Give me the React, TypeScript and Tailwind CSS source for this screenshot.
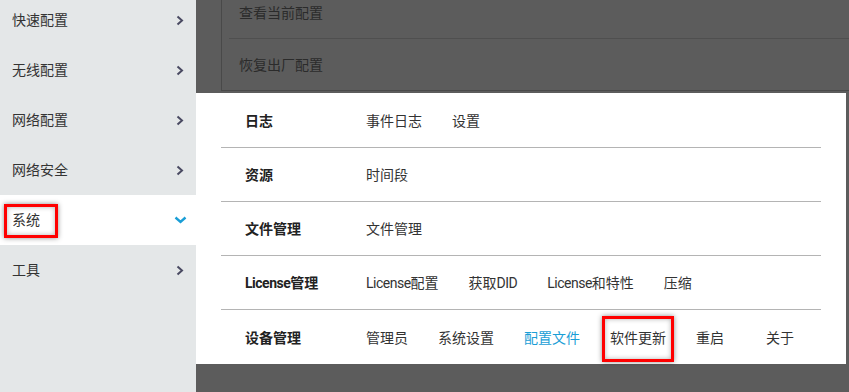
import { ReactNode } from 'react';

const font = { fontFamily: 'Roboto, "Noto Sans CJK SC", sans-serif' };

const sideItems = ['快速配置', '无线配置', '网络配置', '网络安全', '系统', '工具'];

const menuRows: { label: string; links: string[] }[] = [
  { label: '日志', links: ['事件日志', '设置'] },
  { label: '资源', links: ['时间段'] },
  { label: '文件管理', links: ['文件管理'] },
  { label: 'License管理', links: ['License配置', '获取DID', 'License和特性', '压缩'] },
  { label: '设备管理', links: ['管理员', '系统设置', '配置文件', '软件更新', '重启', '关于'] },
];

// the original font is narrower for latin letters than Roboto
function Txt({ text }: { text: string }) {
  const parts = text.split(/([A-Za-z]+)/).filter(Boolean);
  return (
    <>
      {parts.map((p, i) =>
        /[A-Za-z]/.test(p) ? (
          <span key={i} className="tracking-[-0.5px]">
            {p}
          </span>
        ) : (
          <span key={i}>{p}</span>
        )
      )}
    </>
  );
}

function ChevronRight() {
  return (
    <svg width="8" height="11" viewBox="0 0 8 11" className="mr-[12px]">
      <polyline points="1.5,1.5 6,5.5 1.5,9.5" fill="none" stroke="#4a4a62" strokeWidth="2" />
    </svg>
  );
}

function ChevronDown() {
  return (
    <svg width="13" height="8" viewBox="0 0 13 8" className="mr-[9px]">
      <polyline points="1.5,1.5 6.5,6 11.5,1.5" fill="none" stroke="#1a9ed6" strokeWidth="2.4" />
    </svg>
  );
}

function RedMark({ children, className }: { children: ReactNode; className: string }) {
  return (
    <span className="relative inline-block">
      {children}
      <span
        className={`absolute border-[3px] border-[#ff0000] shadow-[0_0_5px_rgba(0,0,0,0.45),inset_0_0_5px_rgba(0,0,0,0.3)] ${className}`}
      />
    </span>
  );
}

export default function App() {
  return (
    <div className="flex w-[849px] h-[392px] overflow-hidden" style={font}>
      {/* left nav */}
      <aside className="w-[196px] shrink-0 bg-[#e4e7e8]">
        <ul className="-mt-[5px]">
          {sideItems.map((item) => {
            const active = item === '系统';
            return (
              <li
                key={item}
                className={`h-[50px] flex items-center justify-between pl-[12px] text-[14px] leading-[20px] text-[#333] ${
                  active ? 'bg-white' : ''
                }`}
              >
                {active ? (
                  <RedMark className="-left-[8px] -right-[18px] -top-[6px] -bottom-[8px]">{item}</RedMark>
                ) : (
                  <span>{item}</span>
                )}
                {active ? <ChevronDown /> : <ChevronRight />}
              </li>
            );
          })}
        </ul>
      </aside>

      {/* dimmed page + mega menu */}
      <main className="flex-1 bg-[#5c5c5c] flex flex-col">
        <div className="ml-[25px] h-[91px] border-l border-b border-[#494949] overflow-hidden pl-[7px]">
          <div className="-mt-[12px] text-[14px] text-[#2b2b2b]">
            <div className="h-[51px] flex items-center pl-[10px] border-b border-[#4f4f4f]">查看当前配置</div>
            <div className="h-[52px] flex items-center pl-[10px]">恢复出厂配置</div>
          </div>
        </div>

        <div className="mt-[2px] w-[650px] h-[271px] bg-white pt-[1px]">
          <div className="mx-[25px]">
            {menuRows.map((row, i) => (
              <div
                key={row.label}
                className={`h-[54px] flex items-center pl-[24px] pt-[1px] text-[14px] leading-[20px] ${
                  i < menuRows.length - 1 ? 'border-b border-[#b4b4b4]' : ''
                }`}
              >
                <span className="w-[121px] shrink-0 font-bold text-[#222] whitespace-nowrap">
                  <Txt text={row.label} />
                </span>
                <div className="flex">
                  {row.links.map((link) => (
                    <span
                      key={link}
                      className={`mr-[30px] min-w-[40px] shrink-0 whitespace-nowrap ${
                        link === '配置文件' ? 'text-[#1a9ed6]' : 'text-[#333]'
                      }`}
                    >
                      {link === '软件更新' ? (
                        <RedMark className="-left-[8px] -right-[8px] -top-[12px] -bottom-[14px]">{link}</RedMark>
                      ) : (
                        <Txt text={link} />
                      )}
                    </span>
                  ))}
                </div>
              </div>
            ))}
          </div>
        </div>
      </main>
    </div>
  );
}
